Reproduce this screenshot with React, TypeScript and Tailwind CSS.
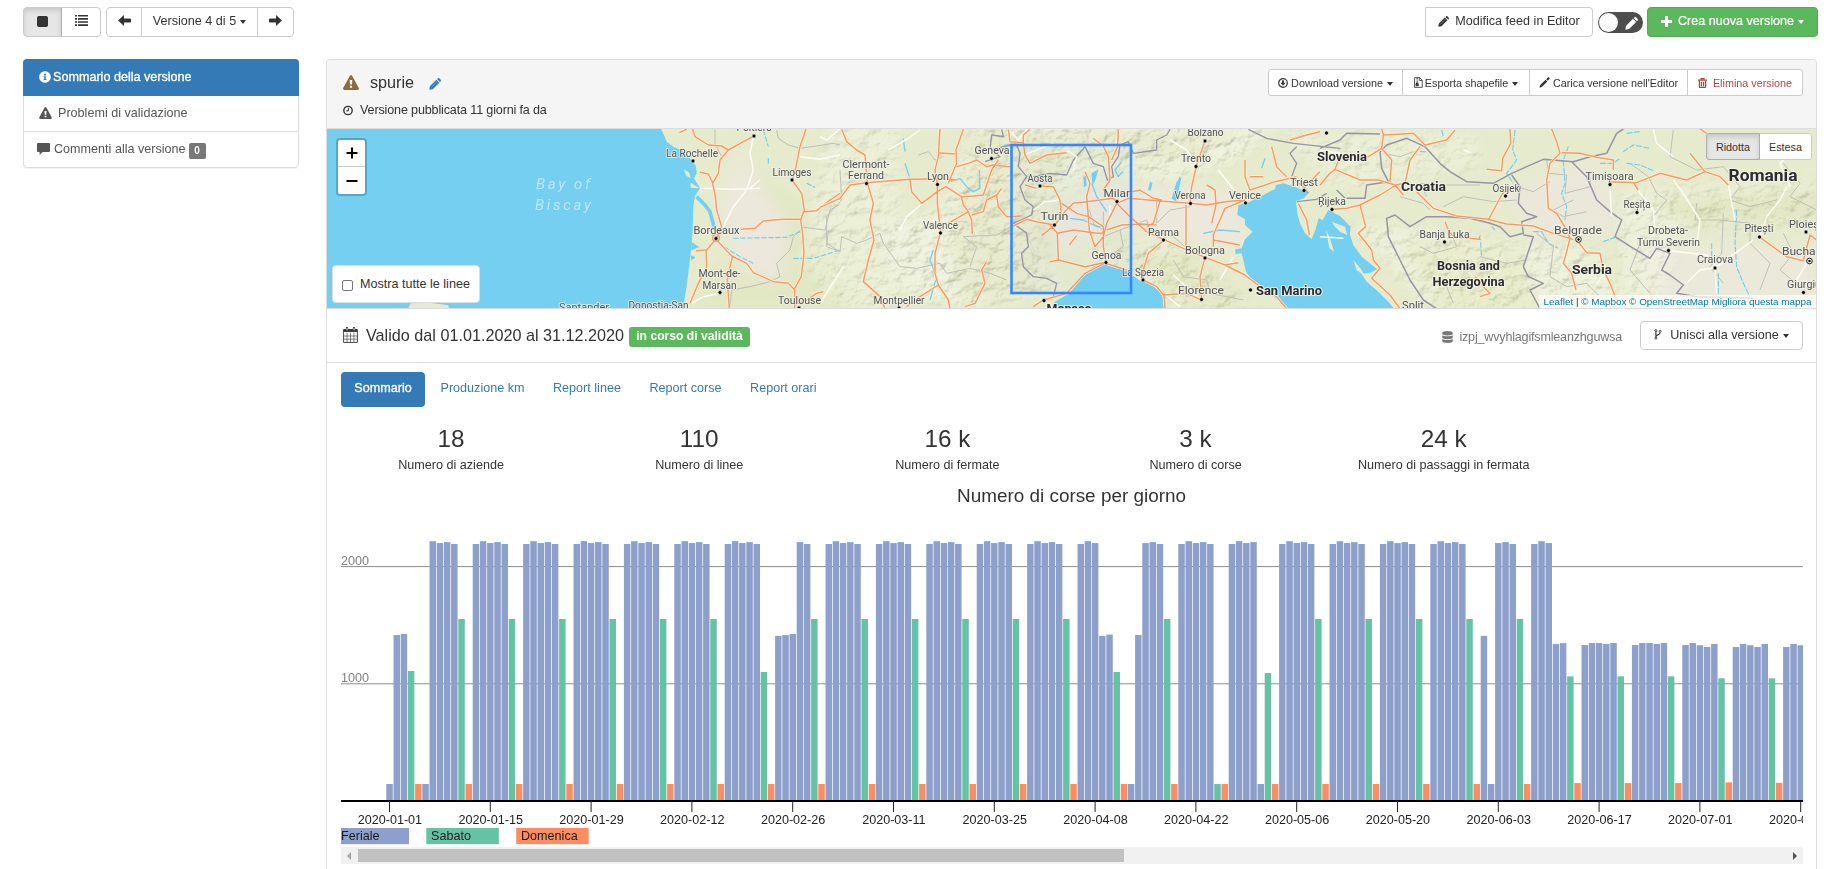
import React from 'react';
import { FaInfoCircle, FaDatabase } from 'react-icons/fa';

type IconProps = { className?: string };

const Warning = ({ className = '' }: IconProps) => (
  <svg viewBox="0 0 16 15" className={className} fill="currentColor" fillRule="evenodd">
    <path d="M8 0q.7 0 1.1.7l6.7 12.4q.6 1.5-1 1.9H1.2q-1.6-.4-1-1.9L6.9.7Q7.3 0 8 0zM6.7 5l.3 4.6h2L9.3 5zM6.9 10.8v2h2.2v-2z" />
  </svg>
);
const Clock = () => (
  <svg viewBox="0 0 11 11" className="mr-[7px] h-[11px] w-[10px]" fill="none" stroke="currentColor">
    <circle cx="5.5" cy="5.5" r="4.6" strokeWidth="1.5" />
    <path d="M5.9 2.7v3.2H3.6" strokeWidth="1.1" />
  </svg>
);
const Pencil = ({ className = '' }: IconProps) => (
  <svg viewBox="0 0 14 14" className={className} fill="currentColor">
    <path d="M1 9.6 8.6 2l3.4 3.4L4.4 13 .4 13.6zM9.4 1.2l.9-.9q.8-.6 1.6.1l1.7 1.7q.7.8.1 1.6l-.9.9z" />
    <path d="M3 10.6 9.6 4" stroke="#fff" strokeWidth=".7" opacity=".6" />
  </svg>
);
const Caret = () => <i className="ml-[4px] mt-[2px] inline-block h-0 w-0 border-x-[3.6px] border-t-[4px] border-x-transparent border-t-current align-middle" />;
const Arrow = ({ className = '' }: IconProps) => (
  <svg viewBox="0 0 13 11" className={`h-[11px] w-[13px] ${className}`} fill="currentColor">
    <path d="M0 5.5 6 0v3.5h6q1 0 1 1v2q0 1-1 1H6V11z" />
  </svg>
);
const ListIcon = () => (
  <svg viewBox="0 0 13 11" className="h-[11px] w-[13px]" fill="currentColor">
    <path d="M0 0h2v1.6H0zM3 0h10v1.6H3zM0 3.1h2v1.6H0zM3 3.1h10v1.6H3zM0 6.2h2v1.6H0zM3 6.2h10v1.6H3zM0 9.3h2v1.6H0zM3 9.3h10v1.6H3z" />
  </svg>
);
const Comment = ({ className = '' }: IconProps) => (
  <svg viewBox="0 0 13 12" className={className} fill="currentColor">
    <path d="M1 0h11q1 0 1 1v7q0 1-1 1H5.5L2.6 12V9H1Q0 9 0 8V1q0-1 1-1z" />
  </svg>
);
const Calendar = () => (
  <svg viewBox="0 0 15 16" className="mr-[8px] h-[16px] w-[15px]" fill="none" stroke="currentColor">
    <path d="M.6 2.6h13.8v12.8H.6z" strokeWidth=".9" />
    <path d="M.6 3.6h13.8" strokeWidth="2.6" />
    <path d="M4 1.2v2.4M11 1.2v2.4" strokeWidth="2.4" strokeLinecap="round" />
    <path d="M4 1v2.4M11 1v2.4" stroke="#fff" strokeWidth=".9" />
    <path d="M.6 9h13.8M.6 12.2h13.8M4.1 5.5v10M7.5 5.5v10M10.9 5.5v10" strokeWidth=".6" />
  </svg>
);
const DownloadIcon = () => (
  <svg viewBox="0 0 10 10" className="mr-[3px] h-[10px] w-[10px]" fill="none" stroke="currentColor" strokeWidth="1.2">
    <circle cx="5" cy="5" r="4.3" />
    <path d="M4.1 2.2h1.8v2.6h1.7L5 7.7 2.4 4.8h1.7z" fill="currentColor" stroke="none" />
  </svg>
);
const ZipIcon = () => (
  <svg viewBox="0 0 10 12" className="mr-[2px] h-[11px] w-[9px]" fill="none" stroke="currentColor" strokeWidth=".9">
    <path d="M.6.6h5.6l3 3v7.8H.6zM6 .8v3h3" />
    <path d="M3.5 1v5" strokeWidth="1.3" strokeDasharray="1 .8" />
    <path d="M2.6 6.4h1.8l.5 3.2H2.1z" fill="currentColor" />
  </svg>
);
const Tool = () => (
  <svg viewBox="0 0 12 12" className="mr-[3px] h-[11px] w-[11px]" fill="currentColor">
    <path d="M.3 11.7 1.4 8.8 7.2 3l1.9 1.9-5.8 5.8zM7.8 2.4 9.9.4q.8-.5 1.4.2.7.7.2 1.4l-2 2.2z" />
  </svg>
);
const Trash = () => (
  <svg viewBox="0 0 10 11" className="mr-[6px] h-[10px] w-[9px]" fill="none" stroke="currentColor">
    <path d="M0 2.3h10M3.3 2V.6h3.4V2" strokeWidth="1.2" />
    <path d="M1.5 3v6.6q0 .9.9.9h5.2q.9 0 .9-.9V3M3.8 4v5M6.2 4v5" strokeWidth="1.4" />
  </svg>
);
const Branch = () => (
  <svg viewBox="0 0 8 12" className="mr-[8px] h-[11px] w-[8px]" fill="none" stroke="currentColor">
    <circle cx="1.7" cy="1.8" r="1.1" />
    <circle cx="6.3" cy="2.6" r="1.1" />
    <circle cx="1.7" cy="10" r="1.1" />
    <path d="M1.7 3v6M6.3 3.8q0 2-2.3 2.6T1.7 8.6" strokeWidth="1.2" />
  </svg>
);

/* ---------- map ---------- */

const seaB =
  'M1255 255 1290 245 1330 225 1365 207 1368 195 1390 190 1415 197 1440 207 1466 218 1452 235 1428 243 1432 280 1440 310 1455 340 1475 357 1486 330 1496 295 1508 300 1525 270 1560 288 1592 320 1590 345 1600 375 1625 410 1672 448 1650 458 1625 462 1640 485 1675 515 1705 545 1722 566 1405 566 1380 545 1330 505 1300 485 1278 455 1270 420 1265 400 1246 402 1246 388 1265 385 1275 358 1298 335 1275 315 1275 298 1252 285Z';

const roadsA =
  'M1118 27 1125 50 1165 75 1205 78 1225 90 1270 65 1302 48M1100 28 1078 38M1225 90 1200 120 1195 160 1178 190 1186 230 1190 270 1205 320 1190 355M1140 157 1165 162 1178 188M1458 27 1440 80 1428 140 1416 180 1445 220 1453 270 1442 300 1448 340 1452 400 1444 470 1424 505 1424 566M1453 275 1490 272 1530 240 1560 220M1262 328 1305 325 1330 303 1390 298 1442 297M1190 355 1160 390 1128 392M1158 390 1160 440 1135 490 1110 550M1190 360 1235 408 1280 430 1300 458 1360 485 1405 490 1424 510M1238 408 1228 450 1222 480 1228 566M1424 555 1460 540 1490 520 1510 515';
const whiteA =
  'M1300 50 1290 100 1300 150 1280 210 1240 260 1210 320M1140 205 1240 208 1320 205M1440 110 1500 118 1560 105M1200 520 1150 530 1115 550M1320 180 1285 208';
const bordersA =
  'M1370 30 1375 55 1405 75 1440 85 1490 78 1540 70 1560 75M1185 28 1185 70 1205 110M1230 566 1235 510 1290 500 1350 485 1380 470 1370 430 1410 390 1420 350 1450 322 1515 330 1530 270 1555 255M1525 330 1520 380 1560 395';
const roadsB =
  'M0 262 60 235 90 195 140 188 270 178 352 176 410 180M65 28 80 65 110 90 135 105 142 188 160 250 150 300 162 360 145 420 130 485 180 530 195 566M360 27 355 110 345 150 352 193 352 250 362 335 345 400 345 460 355 495 300 530 260 560M430 28 408 90 410 130 385 190M355 98 405 102M270 178 275 215 305 250 352 215 378 200 424 230 460 228 490 225 515 150 535 120M410 140 445 130 470 120 500 140 520 135 570 140M424 230 430 255 445 275 455 300 457 342M445 275 385 310M455 285 490 275 500 240 530 225 545 205M500 425 485 450 495 490 465 550 435 560M530 225 535 260 560 290 605 288M355 495 385 540 390 566M565 28 570 65 610 68 615 105 630 130 680 105 740 98M610 68 610 45 630 28M615 195 650 205M660 198 700 200 720 240 725 290 704 315 650 305 620 298 580 318M725 250 770 280 805 290 850 320M725 285 760 250 800 245 880 235 890 245M704 315 665 347M690 315 712 340 715 420 690 425M712 340 760 330 830 340 848 340M770 347 748 375M715 420 795 440 850 428 920 450M795 155 810 190 800 230 808 330 825 380 850 350 860 310 890 250 925 235 1020 243 1110 250 1160 255 1215 245 1275 240M850 320 850 380 858 425M860 330 905 315 965 312 1010 315M890 250 930 290 980 335 1090 385 1155 412 1215 435 1275 465 1320 500 1370 530 1400 566M820 55 850 78 865 110 870 180 850 210 890 245M895 28 893 80 875 120M935 215 960 210 1000 235 1025 240M1020 243 1000 310 980 320M1098 255 1098 380M1155 62 1130 135 1115 200 1110 250M1160 195 1185 210 1188 255 1175 310M1275 240 1215 265 1180 345 1180 380M1180 360 1260 375M1275 120 1275 170 1290 210 1365 185 1430 170M1290 170 1330 170M1355 80 1370 140 1400 170M1410 60 1460 45 1500 35M1030 362 985 400 970 450 970 480 1010 500 1030 525 1100 520 1140 538M1155 412 1140 470 1145 540M1215 435 1255 428M1032 520 1035 566M640 560 670 540 740 520 795 460 858 428M1452 205 1490 165 1500 155M1435 250 1460 300 1468 345';
const whiteB =
  'M240 330 260 290 320 240M0 550 70 440M60 27 20 60 0 50M205 90 265 55 300 30M565 28 595 60 620 28M610 105 650 90 700 70M740 90 770 110 760 150M870 255 870 300M980 480 1080 560M640 270 675 245 720 240M1240 410 1200 480M1060 465 1140 538M1050 60 1100 90 1130 135M1195 150 1250 220';
const riversB =
  'M250 55 255 95M255 130 268 170M390 185 420 175 440 200 460 215 480 205 478 150M340 390 330 420 350 470 330 540M795 180 797 195M815 190 830 230 860 275M750 295 790 300 830 320 855 318M905 125 885 150 895 170 908 155M1335 115 1325 145M1080 170 1060 230M1150 340 1200 330 1260 335';
const bordersB =
  'M510 90 515 45 550 50 545 28M495 125 540 110 515 90 570 75M590 75 600 100 595 140 620 170 600 200 615 240 640 260 635 285 580 310 620 340 625 380 605 400 610 440 640 470 680 475 710 490 700 530 680 540M640 170 690 160 740 165 760 120 795 80 820 130 850 140 862 180 880 170 875 140 895 110 900 75 925 65 940 100 1010 90 1010 60 1040 45 1050 28M1285 28 1340 55 1420 70 1560 85M1430 80 1410 100 1430 130 1415 170 1450 200 1465 220M1430 245 1490 238 1520 220';
const minorB =
  'M60 150 65 240 20 290 20 370 60 395 65 350 110 370 140 360 180 340 190 370 240 440 290 445 360 430 380 460 450 445 510 460 560 480M295 105 325 95 345 120 370 110M450 440 470 380 430 350 530 345 575 320M850 350 900 330 910 380 880 400M900 330 980 300 990 330 1060 350 1095 380M1010 240 1010 310 1050 270 1110 260M1060 420 1090 470 1160 480 1170 520 1270 540M805 260 820 310 850 330 850 275';
const roadsC =
  'M185 27 190 45 250 42 280 40 315 75 380 60 405 30M190 45 185 85 145 110 60 110 45 148 120 180 175 180 225 195 250 225M45 148 30 160 0 195M185 85 215 120 210 185M300 80 270 120 255 190 228 195M36 268 80 265 120 255 180 225 228 195M290 215 340 265 410 288 500 297 560 312 640 318 700 340 760 358M120 255 137 320 115 340 155 390 160 420 180 445 155 475 210 525 240 566M570 27 572 70 548 115 545 152 500 148M505 300 545 225 557 210M695 27 710 65 720 100 690 130 680 180 685 265 710 280 740 330 750 355 740 395 730 430 755 460 768 510M725 98 780 100 830 112 880 120 880 150M870 185 950 188 1020 160 1100 180 1155 155 1200 170 1225 195M940 188 955 210M770 360 800 398 840 400 850 450 870 490 900 566M375 305 385 330 400 350 480 358 478 350M465 470 490 500 510 520 480 530M1317 350 1400 410 1450 422 1470 345 1490 360M1110 100 1155 155M1140 27 1160 40';
const whiteC =
  'M430 90 455 100M0 90 60 100M1000 27 1010 70 1060 110M1060 180 1090 220 1140 300 1130 380M1225 195 1245 300M950 205 1000 270 1005 330M1400 200 1380 240 1340 290 1320 350M1410 200 1380 130 1420 90 1460 60M1185 443 1140 450 1100 490M1050 392 1160 405 1190 440 1300 360M870 200 875 290M1185 443 1190 520M1460 430 1430 480M830 490 860 450M0 350 70 355';
const bordersC =
  'M0 85 60 60 80 40 180 42M180 95 200 75 260 55 315 80 360 130 390 155 440 185 520 190 575 160 620 140 670 118 760 125 810 110 860 100 890 40 910 27M180 95 185 145 205 185 140 195 135 235 80 235M75 235 50 210M575 165 600 200 595 250 620 280 650 290 605 305 610 340 570 350 540 320 510 310 450 295 380 290 320 290 270 320 225 285 200 295 205 350 240 420 270 480 310 540 350 566M755 125 800 170 830 240 870 275 905 300 885 350 940 385 990 415 1010 385 1050 400 1025 450 1050 465 1090 495 1070 520 1130 530 1300 535M610 345 640 350 610 440 625 470 670 490 630 510 660 566M0 260 30 240';
const minorC =
  'M190 100 240 110 280 95M320 230 300 190 380 195 480 195M370 260 430 230 520 245 590 240M590 200 640 215 690 185M680 120 685 160 740 165 735 220 810 200 810 170M760 240 700 270 730 290 800 275M1060 30 1050 110 1130 150 1210 140 1260 200 1230 240 1290 260 1370 240M1390 130 1440 190 1410 230 1490 270M1130 250 1125 300 1200 300 1290 310M1210 280 1205 400 1170 440 1210 490M1290 310 1290 370 1350 430 1320 510M1390 340 1420 400 1380 450 1440 500M390 330 410 380 340 400 300 380M480 410 560 430 620 420M450 470 380 500 400 550M650 340 700 380 690 470 740 500 800 490 850 540M930 130 985 170 1010 220 1040 240 1000 290M960 370 930 450 990 520M240 230 310 250 330 270';
const riversC =
  'M585 30 578 90 590 120 560 160 580 190M745 80 730 120 735 190 725 220 740 260 735 300M640 335 665 335 685 370 715 385M480 345 485 410M515 320 525 330M840 130 880 130 900 115M920 40 960 35M910 95 940 75 990 85M920 130 960 135 1000 152M1250 270 1245 370 1250 440 1270 490 1290 530M1165 120 1185 100M1175 370 1175 430M1195 460 1195 530M850 365 885 352M300 95 320 95M365 30 370 50';

type Label = [number, number, number, string, number?];
const cities: Label[] = [
  [692, 156.5, 52, 'La Rochelle'], [754, 131, 35, 'Poitiers'], [792, 176, 39, 'Limoges'], [716.5, 233.5, 46, 'Bordeaux'],
  [719.5, 276.5, 42, 'Mont-de-'], [719.5, 288.5, 34, 'Marsan'], [799.5, 304, 43, 'Toulouse'], [584, 311, 50, 'Santander'], [658.5, 308.5, 60, 'Donostia-San'],
  [866, 167.5, 47, 'Clermont-'], [866, 179, 36, 'Ferrand'], [938, 180, 22, 'Lyon'], [992, 153.5, 35, 'Geneva'], [940.5, 228.5, 35, 'Valence'], [899, 304, 51, 'Montpellier'],
  [1040, 181.5, 25, 'Aosta'], [1054.5, 219.5, 28, 'Turin', 11.2], [1118, 197, 29, 'Milan', 11.5], [1106.5, 258.5, 30, 'Genoa'], [1143, 276, 42, 'La Spezia'],
  [1205.5, 136, 36, 'Bolzano'], [1196, 161.5, 30, 'Trento'], [1190, 199, 31, 'Verona'], [1245, 199, 32, 'Venice'], [1304, 186, 28, 'Triest'], [1332, 205, 28, 'Rijeka'],
  [1163.5, 236, 31, 'Parma'], [1205, 253.5, 40, 'Bologna'], [1201, 294, 46, 'Florence'],
  [1506, 191.5, 27, 'Osijek'], [1609.5, 180, 48, 'Timișoara'], [1637, 207.5, 27, 'Reșița'], [1444.5, 237.5, 50, 'Banja Luka'], [1578, 233.5, 48, 'Belgrade', 11.2],
  [1668, 234, 40, 'Drobeta-'], [1668.5, 246, 63, 'Turnu Severin'], [1715, 263, 36, 'Craiova'], [1759, 232, 29, 'Pitești'], [1807, 227.5, 36, 'Ploiești'], [1809, 255, 54, 'Bucharest', 11.5], [1804, 288, 34, 'Giurgiu'], [1413, 309, 22, 'Split'],
];
const countries: Label[] = [
  [1342, 161, 50, 'Slovenia', 12.5], [1423.5, 191, 45, 'Croatia', 12.5], [1468.5, 270, 63, 'Bosnia and', 12.5], [1468.5, 285.5, 72, 'Herzegovina', 12.5],
  [1592, 274, 40, 'Serbia', 12.5], [1763, 180.5, 69, 'Romania', 16], [1289, 295, 66, 'San Marino', 12.5], [1069, 313, 45, 'Monaco', 12.5],
];
const dots: [number, number][] = [
  [693, 161], [754, 136], [792, 180], [716, 238.5], [720, 292.5], [799, 308], [866.5, 183.5], [937.5, 184.5], [991.5, 158.5], [940.5, 233], [899, 308],
  [1040, 186], [1054.5, 225], [1117, 201.5], [1106, 262.5], [1143, 280], [1205, 141], [1196, 166.5], [1190.5, 203.5], [1245.5, 203], [1304, 190.5], [1332, 209.5],
  [1163.5, 240], [1205, 258], [1201.5, 299.5], [1250.5, 290], [1044, 300.5], [1326.5, 133], [1505.5, 196], [1610, 184.5], [1637, 212.5], [1444.5, 242],
  [1668.5, 250.5], [1715, 268], [1759.5, 237], [1806, 232], [1803.5, 292.5],
];

const Roads = ({ major, minor }: { major: string; minor: string }) => (
  <>
    <path d={minor} stroke="#fdfcf4" strokeWidth="4.5" />
    <path d={major} stroke="#fdf0dc" strokeWidth="8" />
    <path d={major} stroke="#f79a63" strokeWidth="4.4" />
  </>
);

const MapDrawing = () => (
  <svg viewBox="327 129 1489 179" className="block h-[179px] w-full" preserveAspectRatio="none">
    <defs>
      <filter id="relief" x="0" y="0" width="100%" height="100%">
        <feTurbulence type="fractalNoise" baseFrequency="0.07 0.09" numOctaves="4" seed="8" result="n" />
        <feDiffuseLighting in="n" surfaceScale="4" lightingColor="#fdfff0" diffuseConstant="1.25">
          <feDistantLight azimuth="225" elevation="52" />
        </feDiffuseLighting>
      </filter>
      <filter id="soft"><feGaussianBlur stdDeviation="7" /></filter>
      <mask id="hills">
        <g fill="#fff" filter="url(#soft)">
          <path d="M980 120 1280 120 1240 160 1170 180 1100 170 1050 200 1040 240 1060 290 960 310 900 290 880 230 940 210z" opacity=".9" />
          <path d="M1080 250 1170 240 1230 290 1260 310 1180 310z" opacity=".85" />
          <path d="M1350 220 1480 240 1600 250 1620 310 1430 310z" opacity=".8" />
          <path d="M830 120 900 120 900 310 840 310 800 260z" opacity=".6" />
          <path d="M1620 190 1816 180 1816 225 1680 230 1660 300 1620 300z" opacity=".7" />
          <path d="M1280 130 1480 130 1480 170 1330 190z" opacity=".5" />
        </g>
      </mask>
    </defs>
    <rect x="327" y="129" width="1490" height="180" fill="#e6ebcd" />
    <g filter="url(#soft)">
      <path d="M700 130 760 180 780 230 720 260 690 310 860 310 800 200z" fill="#e2e8c4" />
      <path d="M740 150 790 230 780 280 740 270 720 210z" fill="#ece8dc" />
      <path d="M1050 210 1100 180 1230 190 1250 250 1190 240 1110 225 1060 260z" fill="#ece8dc" />
      <path d="M1500 190 1600 160 1620 230 1540 240z" fill="#ebe8da" />
      <path d="M1640 240 1816 250 1816 310 1660 310z" fill="#ebe9da" />
      <path d="M980 130 1250 130 1180 160 1070 160 1040 220 1050 290 960 300 950 230z" fill="#dcdfb6" />
      <path d="M1100 250 1180 250 1250 308 1190 308z" fill="#d7dcac" />
      <path d="M1400 240 1520 250 1540 308 1440 308z" fill="#dfe4b8" />
      <path d="M1650 200 1816 190 1816 220 1690 225z" fill="#d9deb0" />
    </g>
    <g mask="url(#hills)">
      <rect x="327" y="129" width="1490" height="180" filter="url(#relief)" opacity=".42" className="mix-blend-multiply" />
    </g>
    <g transform="translate(320 120) scale(.33333)" fill="none" strokeLinejoin="round">
      <path d="M20 25H1022L1032 45 1040 65 1062 82 1085 90 1098 105 1112 118 1128 138 1130 160 1122 175 1140 205 1125 228 1120 260 1118 330 1112 400 1100 500 1088 570H20z" fill="#74cff1" />
      <path d="M1090 147 1108 158 1112 175 1100 168zM1112 188 1138 205 1112 204zM262 570 272 550 330 548 385 556 388 570z" fill="#e7ead0" />
      <path d="M1130 230 1155 255 1170 275 1182 320" stroke="#74cff1" strokeWidth="11" />
      <path d="M1114 365 1138 382 1114 390zM1112 405 1126 412 1114 422z" fill="#74cff1" />
      <path d={bordersA} stroke="#bdbebb" strokeWidth="3" />
      <path d="M1330 30 1345 80M1240 355 1400 352 1440 335M1195 370 1260 410 1300 430M1420 415 1480 415 1560 390M1345 115 1345 135M1460 190 1485 202" stroke="#74cff1" strokeWidth="3.5" strokeDasharray="16 5" />
      <Roads major={roadsA} minor={whiteA} />
      <circle cx="1188" cy="354" r="10" stroke="#f79a63" strokeWidth="4" />
    </g>
    <g transform="translate(820 120) scale(.33333)" fill="none" strokeLinejoin="round">
      <path d={seaB} fill="#74cff1" />
      <path d="M690 570 705 545 745 522 765 500 795 460 820 440 850 428 880 436 920 452 960 482 1000 492 1025 515 1033 570z" fill="#74cff1" />
      <path d="M545 75 600 68 570 80zM790 170l8-3 2 30-8 5zM815 160l20-12-8 30-10 20zM1085 172 1068 245 1055 235 1070 185zM990 185l8 3-6 24-8-3z" fill="#74cff1" />
      <path d="M1535 305 1575 320 1582 345 1560 335 1545 320zM1518 330 1530 355 1542 395 1528 385zM1600 420 1625 450 1635 470 1610 450z" fill="#e7ead0" />
      <path d={riversB} stroke="#74cff1" strokeWidth="4" />
      <path d={minorB} stroke="#bfc0b9" strokeWidth="3" />
      <path d={bordersB} stroke="#9794a6" strokeWidth="4" />
      <Roads major={roadsB} minor={whiteB} />
    </g>
    <g transform="translate(1320 120) scale(.33333)" fill="none" strokeLinejoin="round">
      <path d={riversC} stroke="#74cff1" strokeWidth="3.5" strokeDasharray="18 4" />
      <path d={minorC} stroke="#c0c0b8" strokeWidth="3" />
      <path d={bordersC} stroke="#9794a6" strokeWidth="4.5" />
      <Roads major={roadsC} minor={whiteC} />
    </g>
    <g fontFamily="Roboto, 'Liberation Sans', sans-serif" textAnchor="middle" paintOrder="stroke" strokeLinejoin="round">
      <g fill="#505156" fontWeight="400" stroke="#f2f2e4" strokeOpacity=".75" strokeWidth="2">
        {cities.map(([x, y, w, t, s]) => (
          <text key={t} x={x} y={y} textLength={w} lengthAdjust="spacingAndGlyphs" fontSize={s ?? 10.6}>{t}</text>
        ))}
      </g>
      <g fill="#2b2b30" fontWeight="700" stroke="#f5f5e8" strokeOpacity=".8" strokeWidth="2.2">
        {countries.map(([x, y, w, t, s]) => (
          <text key={t} x={x} y={y} textLength={w} lengthAdjust="spacingAndGlyphs" fontSize={s}>{t}</text>
        ))}
      </g>
      <g fill="#bfe6f6" fontStyle="italic" fontSize="15">
        <text x="563" y="188.5" textLength="54">Bay of</text>
        <text x="563" y="209.5" textLength="56">Biscay</text>
      </g>
    </g>
    {dots.map(([x, y]) => <circle key={`${x}-${y}`} cx={x} cy={y} r="1.9" fill="#000" stroke="#fff" strokeWidth=".5" />)}
    {[[1578.5, 239.5], [1809.5, 261]].map(([x, y]) => (
      <g key={x}><circle cx={x} cy={y} r="2.8" fill="#fff" stroke="#222" /><circle cx={x} cy={y} r="1.2" fill="#000" /></g>
    ))}
    <rect x="1011.5" y="145" width="119.5" height="148" fill="#3388ff" fillOpacity=".02" stroke="#3388ff" strokeWidth="2.6" />
  </svg>
);

/* ---------- chart ---------- */

const WEEK = [2192, 2216, 2200, 2208, 2192, 1552, 144];
const JUNE = [1330, 1347, 1347, 1339, 1347, 1063, 152];
const JULY_FIRST = [1330, 1347, 1328, 1313, 1339, 1046, 158];
const JULY = [1313, 1339, 1328, 1313, 1339, 1046, 154];
const EXCEPTIONS: Record<number, number> = {
  0: 144, 1: 1415, 2: 1424, 3: 1108, 5: 144, 52: 1100, 54: 1408, 55: 1415, 56: 1424,
  99: 1408, 100: 1419, 101: 1100, 103: 144, 104: 1415, 115: 144, 121: 144, 122: 1091,
  152: 1408, 153: 144, 162: 1338, 163: 1346, 164: 1063, 165: 152,
};
const trips = Array.from({ length: 200 }, (_, i) => {
  const day = (i + 2) % 7;
  const table = i >= 187 ? JULY : i >= 180 ? JULY_FIRST : i >= 166 ? JUNE : WEEK;
  return { i, day, value: EXCEPTIONS[i] ?? table[day] };
});
const dates = ['2020-01-01', '2020-01-15', '2020-01-29', '2020-02-12', '2020-02-26', '2020-03-11', '2020-03-25', '2020-04-08', '2020-04-22', '2020-05-06', '2020-05-20', '2020-06-03', '2020-06-17', '2020-07-01', '2020-07-15'];
const legend: [number, number, string, string, number][] = [
  [341, 68, '#8da0cb', 'Feriale', 341],
  [426.3, 72.5, '#66c2a5', 'Sabato', 431],
  [516.2, 72.5, '#fc8d62', 'Domenica', 521],
];

const Chart = () => (
  <svg viewBox="341 520 1462 327" className="block h-[327px] w-[1462px]" fontFamily="'Liberation Sans', Arial, sans-serif" fontSize="12.6">
    <path d="M341 566.6H1803M341 683.8H1803" stroke="#8c8c8c" />
    <g fill="#808080"><text x="341" y="565">2000</text><text x="341" y="682">1000</text></g>
    {trips.map(({ i, day, value }) => (
      <rect key={i} x={386.3 + i * 7.2} y={800.9 - value * 0.1172} width="6.48" height={value * 0.1172}
        fill={day === 5 ? '#66c2a5' : day === 6 ? '#fc8d62' : '#8da0cb'} />
    ))}
    <path d="M341 801H1803" stroke="#000" strokeWidth="1.8" />
    {dates.map((d, i) => (
      <g key={d}>
        <path d={`M${389.5 + i * 100.8} 801v11`} stroke="#222" />
        <text x={389.9 + i * 100.8} y="823.7" textAnchor="middle" fill="#222">{d}</text>
      </g>
    ))}
    {legend.map(([x, w, c, t, tx]) => (
      <g key={t}><rect x={x} y="828" width={w} height="16.2" fill={c} /><text x={tx} y="840" fill="#1c1c1c">{t}</text></g>
    ))}
  </svg>
);

/* ---------- page ---------- */

const cell = 'flex h-full items-center justify-center';

const Toolbar = () => (
  <div className="flex h-[30px] items-stretch justify-between">
    <div className="flex">
      <div className="flex w-[78px] overflow-hidden rounded-[4px] border border-[#ccc]">
        <div className={`${cell} -my-px -ml-px !h-[30px] w-[39px] rounded-l-[4px] border border-[#adadad] bg-[#e6e6e6] shadow-[inset_0_3px_5px_rgba(0,0,0,0.125)]`}>
          <span className="-mt-[2px] h-[11px] w-[11px] rounded-[2px] bg-[#333]" />
        </div>
        <div className={`${cell} flex-1 pb-[3px]`}><ListIcon /></div>
      </div>
      <div className="ml-[5px] flex w-[188px] divide-x divide-[#ccc] rounded-[4px] border border-[#ccc]">
        <div className={`${cell} w-[35px] pb-[3px]`}><Arrow /></div>
        <div className={`${cell} flex-1 pb-[2px]`}>Versione 4 di 5<Caret /></div>
        <div className={`${cell} w-[35px] pb-[3px]`}><Arrow className="rotate-180" /></div>
      </div>
    </div>
    <div className="flex items-center">
      <div className="flex h-[30px] w-[168px] items-center justify-center rounded-r-[4px] border border-[#ccc] pb-[2px]">
        <Pencil className="mr-[6px] h-[11px] w-[11px]" />Modifica feed in Editor
      </div>
      <div className="ml-[5px] flex h-[21px] w-[45px] items-center justify-between rounded-full bg-[#4d4d4d] p-[1px] pr-[5px] text-white">
        <span className="h-[19px] w-[19px] rounded-full bg-[#fafafa]" />
        <Pencil className="mt-[3px] h-[13px] w-[13px]" />
      </div>
      <div className="ml-[4px] flex h-[30px] w-[171px] items-center justify-center rounded-[4px] border border-[#4cae4c] bg-[#5cb85c] pb-[2px] text-white [-webkit-text-stroke:0.2px_white]">
        <svg viewBox="0 0 11 11" className="mr-[6px] h-[11px] w-[11px]" fill="#fff"><path d="M4 0h3v4h4v3H7v4H4V7H0V4h4z" /></svg>
        Crea nuova versione<Caret />
      </div>
    </div>
  </div>
);

const Sidebar = () => (
  <div className="h-[109px] w-[276px] shrink-0 rounded-[4px] border border-[#ddd] text-[#555] shadow-[0_1px_1px_rgba(0,0,0,0.05)]">
    <div className="-mx-px -mt-px flex h-[37px] items-center rounded-t-[4px] bg-[#337ab7] pb-[2px] pl-[16px] text-white [-webkit-text-stroke:0.3px_white]">
      <FaInfoCircle className="mr-[2px] h-[12px] w-[12px]" />Sommario della versione
    </div>
    <div className="flex h-[36px] items-center border-b border-[#ddd] pb-[2px] pl-[15px]">
      <Warning className="mr-[6px] h-[12px] w-[13px]" />Problemi di validazione
    </div>
    <div className="flex h-[36px] items-center pb-[2px] pl-[13px]">
      <Comment className="mr-[4px] h-[12px] w-[13px]" />Commenti alla versione
      <b className="ml-[3px] mt-[3px] flex h-[16px] w-[17px] items-center justify-center rounded-[2px] bg-[#777] text-[10px] text-white">0</b>
    </div>
  </div>
);

const stats: [string, string][] = [
  ['18', 'Numero di aziende'],
  ['110', 'Numero di linee'],
  ['16 k', 'Numero di fermate'],
  ['3 k', 'Numero di corse'],
  ['24 k', 'Numero di passaggi in fermata'],
];

const Panel = () => (
  <div className="h-[820px] w-[1491px] shrink-0 rounded-[4px] border border-[#ddd]">
    <div className="flex h-[69px] justify-between rounded-t-[4px] border-b border-[#ddd] bg-[#f5f5f5] pl-[16px] pr-[13px]">
      <div className="pt-[12px]">
        <div className="flex h-[20px] items-center text-[16.2px]">
          <Warning className="h-[15px] w-[16px] text-[#8a6d3b]" />
          <span className="ml-[11px]">spurie</span>
          <Pencil className="ml-[15px] mt-[3px] h-[12px] w-[12px] text-[#337ab7]" />
        </div>
        <div className="mt-[9px] flex h-[18px] items-center tracking-[-0.16px]"><Clock />Versione pubblicata 11 giorni fa da</div>
      </div>
      <div className="mt-[9px] flex h-[27px] w-[535px] divide-x divide-[#ccc] rounded-[3px] border border-[#ccc] bg-white text-[10.8px]">
        <div className={`${cell} w-[134px]`}><DownloadIcon />Download versione<Caret /></div>
        <div className={`${cell} w-[127px]`}><ZipIcon />Esporta shapefile<Caret /></div>
        <div className={`${cell} w-[158px]`}><Tool />Carica versione nell'Editor</div>
        <div className={`${cell} flex-1 text-[#b5413e]`}><Trash />Elimina versione</div>
      </div>
    </div>

    <div className="relative h-[180px] overflow-hidden border-b border-[#ddd]">
      <MapDrawing />
      <div className="absolute left-[9px] top-[9px] w-[31px] overflow-hidden rounded-[4px] border-2 border-black/20 bg-white bg-clip-padding text-black">
        <div className="flex h-[27px] items-center justify-center border-b border-[#ccc]"><svg viewBox="0 0 12 12" className="h-[12px] w-[12px]"><path d="M6 .5v11M.5 6h11" stroke="#000" strokeWidth="2" /></svg></div>
        <div className="flex h-[27px] items-center justify-center"><svg viewBox="0 0 12 12" className="h-[12px] w-[12px]"><path d="M.5 6h11" stroke="#000" strokeWidth="2" /></svg></div>
      </div>
      <div className="absolute left-[5px] top-[136px] flex h-[38px] w-[148px] items-center rounded-[4px] border border-[#ddd] bg-white pb-px pl-[9px]">
        <span className="mr-[7px] mt-[4px] h-[11px] w-[11px] rounded-[2px] border border-[#767676]" />Mostra tutte le linee
      </div>
      <div className="absolute right-[4px] top-[4px] flex h-[27px] w-[106px] rounded-[3px] border border-[#ccc] bg-white text-[10.8px]">
        <div className={`${cell} -ml-px -mt-px !h-[27px] w-[54px] rounded-l-[3px] border border-[#adadad] bg-[#e6e6e6] shadow-[inset_0_3px_5px_rgba(0,0,0,0.125)]`}>Ridotta</div>
        <div className={`${cell} flex-1`}>Estesa</div>
      </div>
      <div className="absolute bottom-0 right-0 flex h-[13px] w-[277px] items-center justify-center whitespace-pre bg-white/70 text-[9.9px] text-[#0078a8]">
        Leaflet <span className="text-[#333]">|</span> © Mapbox © OpenStreetMap Migliora questa mappa
      </div>
    </div>

    <div className="flex h-[54px] items-center justify-between border-b border-[#ddd] pl-[16px] pr-[13px]">
      <div className="-mt-[2px] flex items-center text-[16.2px]">
        <Calendar />Valido dal 01.01.2020 al 31.12.2020
        <b className="ml-[5px] mt-[5px] flex h-[20px] w-[121px] items-center justify-center rounded-[3px] bg-[#5cb85c] pb-[2px] text-[12.15px] text-white">in corso di validità</b>
      </div>
      <div className="flex items-center">
        <span className="mr-[18px] mt-[2px] flex items-center tracking-[-0.2px] text-[#777]"><FaDatabase className="mr-[6px] h-[12px] w-[11px]" />izpj_wvyhlagifsmleanzhguwsa</span>
        <div className="flex h-[29px] w-[163px] items-center justify-center rounded-[4px] border border-[#ccc] pb-[2px]"><Branch />Unisci alla versione<Caret /></div>
      </div>
    </div>

    <div className="mt-[8px] flex h-[36px] items-center pb-[2px] pl-[14px] text-[#337ab7]">
      <div className="mt-[2px] flex h-[35px] w-[84px] items-center justify-center rounded-[4px] bg-[#337ab7] pb-[2px] text-white [-webkit-text-stroke:0.3px_white]">Sommario</div>
      <span className="ml-[15.5px]">Produzione km</span>
      <span className="ml-[28.5px]">Report linee</span>
      <span className="ml-[28.5px]">Report corse</span>
      <span className="ml-[28.5px]">Report orari</span>
    </div>

    <div className="mt-[18px] grid h-[60px] w-[1489px] grid-cols-6 text-center">
      {stats.map(([n, label]) => (
        <div key={label}>
          <div className="text-[24.3px] leading-[28px]">{n}</div>
          <div className="mt-[3px] leading-[18px]">{label}</div>
        </div>
      ))}
    </div>
    <div className="h-[35px] text-center text-[18.9px] leading-[22px]">Numero di corse per giorno</div>

    <div className="ml-[14px] w-[1462px] overflow-hidden">
      <Chart />
      <div className="flex h-[17px] items-center bg-[#f1f1f1]">
        <span className="ml-[6px] border-y-[4px] border-r-[4px] border-y-transparent border-r-[#a3a3a3]" />
        <span className="ml-[7px] h-[13px] w-[766px] bg-[#c1c1c1]" />
        <span className="ml-auto mr-[6px] border-y-[4px] border-l-[4px] border-y-transparent border-l-[#505050]" />
      </div>
    </div>
  </div>
);

export default function App() {
  return (
    <div className="h-[869px] w-[1841px] overflow-hidden bg-white pl-[23px] pr-[23px] pt-[7px] font-['Liberation_Sans',Arial,sans-serif] text-[12.6px] leading-[18px] text-[#333]">
      <Toolbar />
      <div className="mt-[22px] flex justify-between pr-px">
        <Sidebar />
        <Panel />
      </div>
    </div>
  );
}
